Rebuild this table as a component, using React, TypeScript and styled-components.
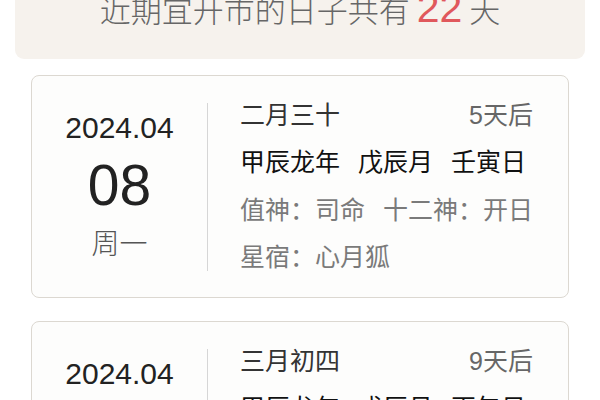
import React from "react";
import styled, { createGlobalStyle } from "styled-components";

const GlobalStyle = createGlobalStyle`
  html, body {
    margin: 0;
    padding: 0;
    background: #ffffff;
    font-family: "Liberation Sans", "Noto Sans CJK SC", sans-serif;
  }
  #root { overflow: hidden; height: 400px; }
`;

const Page = styled.div`
  padding: 0 15px;
  display: flex;
  flex-direction: column;
  gap: 16px;
`;

const Banner = styled.div`
  margin-top: -32px;
  padding: 20px 0 30px;
  background: #f6f2ed;
  border-radius: 0 0 9px 9px;
  text-align: center;
  font-size: 31px;
  line-height: 40px;
  color: #666666;
  font-family: "Noto Sans CJK SC", sans-serif;
  font-weight: 300;
`;

const Count = styled.span`
  font-family: "Liberation Sans", sans-serif;
  font-size: 41px;
  line-height: 1;
  color: #e0585c;
  font-weight: 400;
`;

const List = styled.div`
  display: flex;
  flex-direction: column;
  gap: 23px;
  padding: 0 16px;
`;

const Card = styled.div`
  display: flex;
  align-items: center;
  height: 223px;
  box-sizing: border-box;
  border: 1px solid #dcd8d1;
  border-radius: 8px;
  background: #fdfdfc;
`;

const DateCol = styled.div`
  width: 177px;
  display: flex;
  flex-direction: column;
  align-items: center;
  color: #222;
  margin-top: -4px;
`;

const YearMonth = styled.div`
  font-size: 30px;
  line-height: 40px;
`;

const Day = styled.div`
  font-size: 57px;
  line-height: 74px;
`;

const Weekday = styled.div`
  font-family: "Noto Sans CJK SC", sans-serif;
  font-size: 28px;
  line-height: 40px;
  color: #555;
  font-weight: 300;
`;

const Divider = styled.div`
  width: 1px;
  height: 168px;
  background: #d6d6d6;
`;

const InfoCol = styled.div`
  flex: 1;
  padding: 0 35px 0 32px;
  font-family: "Liberation Sans", "Noto Sans CJK SC", sans-serif;
  font-size: 25px;
`;

const Row = styled.div<{ $tone: "dark" | "strong" | "muted" }>`
  display: flex;
  justify-content: space-between;
  line-height: 47.5px;
  white-space: nowrap;
  color: ${(p) => (p.$tone === "strong" ? "#111" : p.$tone === "dark" ? "#333" : "#7a7a7a")};
  font-weight: 400;
`;

const Group = styled.div`
  display: flex;
`;

const Item = styled.span<{ $gap: number }>`
  & + & {
    margin-left: ${(p) => p.$gap}px;
  }
`;

const Ago = styled.span`
  color: #666;
`;

type DayInfo = {
  ym: string;
  day: string;
  week: string;
  lunar: string;
  after: string;
  gz: string[];
  shen: string[];
  xiu: string;
};

const days: DayInfo[] = [
  {
    ym: "2024.04",
    day: "08",
    week: "周一",
    lunar: "二月三十",
    after: "5天后",
    gz: ["甲辰龙年", "戊辰月", "壬寅日"],
    shen: ["值神：司命", "十二神：开日"],
    xiu: "星宿：心月狐",
  },
  {
    ym: "2024.04",
    day: "12",
    week: "周五",
    lunar: "三月初四",
    after: "9天后",
    gz: ["甲辰龙年", "戊辰月", "丙午日"],
    shen: ["值神：金匮", "十二神：定日"],
    xiu: "星宿：翼火蛇",
  },
];

export default function App() {
  return (
    <>
      <GlobalStyle />
      <Page>
        <Banner>
          近期宜开市的日子共有 <Count>22</Count> 天
        </Banner>
        <List>
          {days.map((d) => (
            <Card key={d.day}>
              <DateCol>
                <YearMonth>{d.ym}</YearMonth>
                <Day>{d.day}</Day>
                <Weekday>{d.week}</Weekday>
              </DateCol>
              <Divider />
              <InfoCol>
                <Row $tone="dark">
                  <span>{d.lunar}</span>
                  <Ago>{d.after}</Ago>
                </Row>
                <Row $tone="strong">
                  <Group>
                    {d.gz.map((g) => (
                      <Item key={g} $gap={10}>{g}</Item>
                    ))}
                  </Group>
                </Row>
                <Row $tone="muted">
                  <Group>
                    {d.shen.map((g) => (
                      <Item key={g} $gap={18}>{g}</Item>
                    ))}
                  </Group>
                </Row>
                <Row $tone="muted">
                  <span>{d.xiu}</span>
                </Row>
              </InfoCol>
            </Card>
          ))}
        </List>
      </Page>
    </>
  );
}
